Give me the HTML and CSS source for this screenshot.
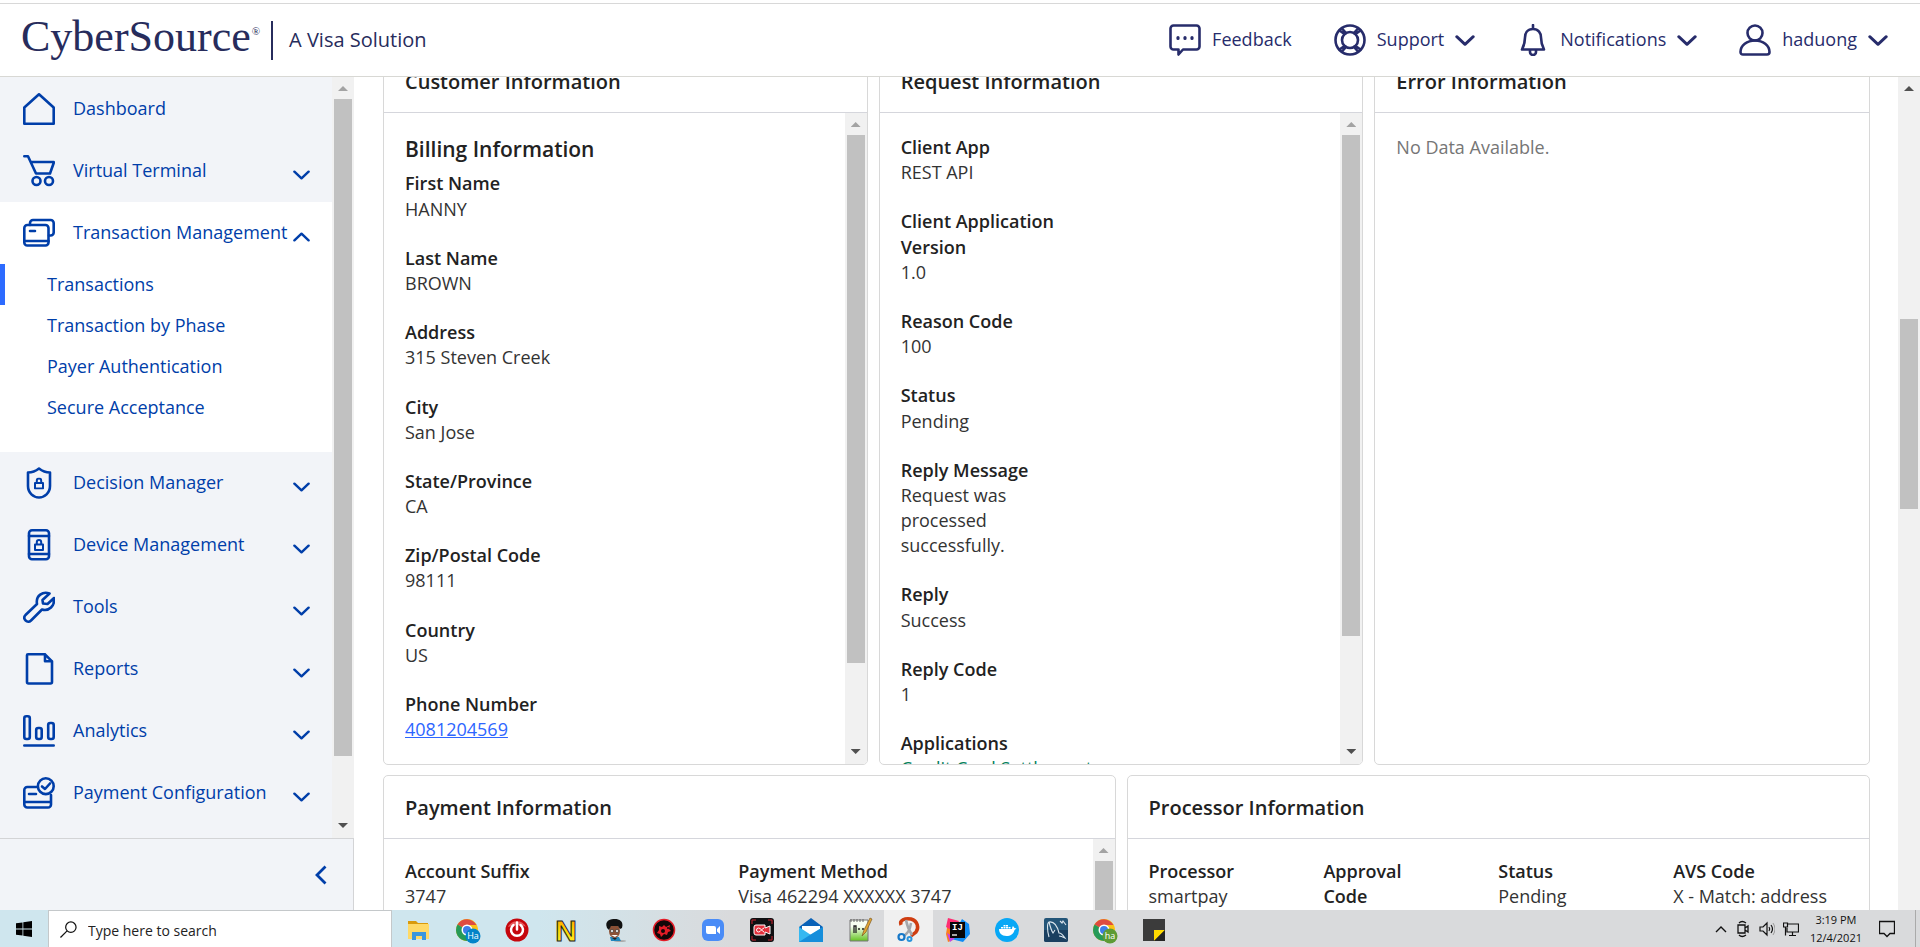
FILE: index.html
```html
<!DOCTYPE html>
<html lang="en">
<head>
<meta charset="utf-8">
<title>CyberSource - Transaction Details</title>
<link rel="stylesheet" href="styles.css">
</head>
<body>
<svg class="sprite" aria-hidden="true">
  <symbol id="chev" viewBox="0 0 18 10"><path d="M1.5 1.5 9 8.5l7.500-7" fill="none" stroke="currentColor" stroke-width="2.600" stroke-linecap="round" stroke-linejoin="round"/></symbol>
  <symbol id="lock" viewBox="0 0 12 12"><path d="M2 5.500h8v5.500H2zM3.800 5V3.200a2.200 2.200 0 0 1 4.400 0V5" fill="none" stroke="currentColor" stroke-width="2" stroke-linejoin="round"/></symbol>
</svg>

<header class="header">
  <div class="brand">
    <span class="brand-name">CyberSource<sup>®</sup></span>
    <span class="brand-tag">A Visa Solution</span>
  </div>
  <nav class="tools" aria-label="Account">
    <button class="tool" type="button">
      <svg class="ico" viewBox="0 0 32 32"><path d="M4.500 1.500h23a3 3 0 0 1 3 3v18a3 3 0 0 1-3 3H14l-4.500 5v-5h-5a3 3 0 0 1-3-3v-18a3 3 0 0 1 3-3z"/><path d="M9 13.500v1M16 13.500v1M23 13.500v1" stroke-width="3.200"/></svg>
      <span>Feedback</span>
    </button>
    <button class="tool" type="button">
      <svg class="ico" viewBox="0 0 32 32"><circle cx="16" cy="16" r="14.500"/><circle cx="16" cy="16" r="8"/><path d="M5.500 6.500 10.500 10M8 4.500l4 4.500M26.500 6.500 21.500 10M24 4.500 20 9M5.500 25.500l5-3.500M8 27.500l4-4.500M26.500 25.500l-5-3.500M24 27.500 20 23"/></svg>
      <span>Support</span><svg class="chev"><use href="#chev"/></svg>
    </button>
    <button class="tool" type="button">
      <svg class="ico" viewBox="0 0 32 32"><path d="M16 1v4M16 5c-5.500 0-8 4-8 8.500 0 6-1 8-3 12h22c-2-4-3-6-3-12C24 9 21.500 5 16 5zM13 26v2a3 3 0 0 0 6 0v-2"/></svg>
      <span>Notifications</span><svg class="chev"><use href="#chev"/></svg>
    </button>
    <button class="tool" type="button">
      <svg class="ico" viewBox="0 0 32 32"><circle cx="16" cy="9" r="7.500"/><path d="M1.500 28c0-6.500 6.500-11.500 14.500-11.500S30.500 21.500 30.500 28c0 1.500-1 2.500-2.500 2.500H4c-1.500 0-2.500-1-2.500-2.500z"/></svg>
      <span>haduong</span><svg class="chev"><use href="#chev"/></svg>
    </button>
  </nav>
</header>

<div class="workspace">
  <aside class="sidebar">
    <div class="side-scroll">
      <nav class="menu" aria-label="Main">
        <button class="item" type="button"><svg class="ico" viewBox="0 0 32 32"><path d="M1.300 14.500 16 1.300l14.700 13.200V30.700H1.300z"/></svg><span>Dashboard</span></button>
        <button class="item" type="button"><svg class="ico" viewBox="0 0 32 32"><path d="M1.300 1.300H5l8 17.200h14L30.700 8V7H8"/><circle cx="13.500" cy="26" r="4"/><circle cx="26" cy="26" r="4"/></svg><span>Virtual Terminal</span><svg class="chev"><use href="#chev"/></svg></button>
        <section class="open">
          <button class="item" type="button" aria-expanded="true"><svg class="ico" viewBox="0 0 32 32"><rect x="1.300" y="8" width="24.200" height="20.500" rx="3"/><path d="M1.300 24h24.200M7 14h5M7 8V6a3 3 0 0 1 3-3h17.700a3 3 0 0 1 3 3v9.500a3 3 0 0 1-3 3H26"/></svg><span>Transaction Management</span><svg class="chev up"><use href="#chev"/></svg></button>
          <a class="sub current" href="#transactions">Transactions</a>
          <a class="sub" href="#phase">Transaction by Phase</a>
          <a class="sub" href="#payer">Payer Authentication</a>
          <a class="sub" href="#secure">Secure Acceptance</a>
        </section>
        <button class="item" type="button"><svg class="ico" viewBox="0 0 32 32"><path d="M16 1.500c2.500 2 6 4 11 4V19c0 7-5.500 11.500-11 11.500S5 26 5 19V5.500c5 0 8.500-2 11-4z"/><use href="#lock" x="10" y="10.500" width="12" height="12"/></svg><span>Decision Manager</span><svg class="chev"><use href="#chev"/></svg></button>
        <button class="item" type="button"><svg class="ico" viewBox="0 0 32 32"><rect x="6" y="1.300" width="20" height="29" rx="3"/><path d="M6 7h20M6 25h20"/><use href="#lock" x="10" y="10" width="12" height="12"/></svg><span>Device Management</span><svg class="chev"><use href="#chev"/></svg></button>
        <button class="item" type="button"><svg class="ico" viewBox="0 0 32 32"><path d="M26.500 2.500C20 0 12.500 4.500 14 13L2.500 24c-3.500 4 2 9 5.500 5.500L19 18.500c7 2 13-3.500 12-11.500l-6.500 6-4.500-.5-.5-3.500z"/></svg><span>Tools</span><svg class="chev"><use href="#chev"/></svg></button>
        <button class="item" type="button"><svg class="ico" viewBox="0 0 32 32"><path d="M5 1.300h17l7 7V29a1.500 1.500 0 0 1-1.500 1.500h-22A1.500 1.500 0 0 1 4 29V2.300a1 1 0 0 1 1-1zM22 1.300v7h7"/></svg><span>Reports</span><svg class="chev"><use href="#chev"/></svg></button>
        <button class="item" type="button"><svg class="ico" viewBox="0 0 32 32"><rect x="1.300" y="1.300" width="5.500" height="22.700" rx="2"/><rect x="13.200" y="13" width="5.500" height="11" rx="2"/><rect x="25.200" y="8" width="5.500" height="16" rx="2"/><path d="M1.300 30.500h29.400"/></svg><span>Analytics</span><svg class="chev"><use href="#chev"/></svg></button>
        <button class="item" type="button"><svg class="ico" viewBox="0 0 32 32"><path d="M14 10H4.300a3 3 0 0 0-3 3v14.500a3 3 0 0 0 3 3H25a3 3 0 0 0 3-3V18M1.300 25H28M6 17h7"/><circle cx="22.800" cy="9.200" r="7.900"/><path d="m19 9.500 3 2.500 5-5.500"/></svg><span>Payment Configuration</span><svg class="chev"><use href="#chev"/></svg></button>
      </nav>
      <div class="bar bar-side"><i class="arrow dim"></i><div class="track"><div class="thumb"></div></div><i class="arrow down"></i></div>
    </div>
    <div class="side-foot">
      <button class="collapse" type="button" aria-label="Collapse menu"><svg viewBox="0 0 12 20"><path d="M10.500 1.500 2 10l8.500 8.500" fill="none" stroke="currentColor" stroke-width="2.800"/></svg></button>
    </div>
  </aside>

  <main class="main">
    <div class="row row-three">
      <section class="card">
        <h2>Customer Information</h2>
        <div class="card-body">
          <div class="fields">
            <h3>Billing Information</h3>
            <dl>
              <div><dt>First Name</dt><dd>HANNY</dd></div>
              <div><dt>Last Name</dt><dd>BROWN</dd></div>
              <div><dt>Address</dt><dd>315 Steven Creek</dd></div>
              <div><dt>City</dt><dd>San Jose</dd></div>
              <div><dt>State/Province</dt><dd>CA</dd></div>
              <div><dt>Zip/Postal Code</dt><dd>98111</dd></div>
              <div><dt>Country</dt><dd>US</dd></div>
              <div><dt>Phone Number</dt><dd><a class="phone" href="#phone">4081204569</a></dd></div>
            </dl>
          </div>
          <div class="bar bar-customer"><i class="arrow dim"></i><div class="track"><div class="thumb"></div></div><i class="arrow down"></i></div>
        </div>
      </section>
      <section class="card">
        <h2>Request Information</h2>
        <div class="card-body">
          <div class="fields">
            <dl class="narrow">
              <div><dt>Client App</dt><dd>REST API</dd></div>
              <div><dt>Client Application Version</dt><dd>1.0</dd></div>
              <div><dt>Reason Code</dt><dd>100</dd></div>
              <div><dt>Status</dt><dd>Pending</dd></div>
              <div><dt>Reply Message</dt><dd>Request was processed successfully.</dd></div>
              <div><dt>Reply</dt><dd>Success</dd></div>
              <div><dt>Reply Code</dt><dd>1</dd></div>
              <div><dt>Applications</dt><dd class="ok">Credit Card Settlement</dd></div>
            </dl>
          </div>
          <div class="bar bar-request"><i class="arrow dim"></i><div class="track"><div class="thumb"></div></div><i class="arrow down"></i></div>
        </div>
      </section>
      <section class="card">
        <h2>Error Information</h2>
        <div class="card-body"><div class="fields"><p class="empty">No Data Available.</p></div></div>
      </section>
    </div>
    <div class="row row-two">
      <section class="card">
        <h2>Payment Information</h2>
        <div class="card-body">
          <div class="fields">
            <dl class="cols two">
              <div><dt>Account Suffix</dt><dd>3747</dd></div>
              <div><dt>Payment Method</dt><dd>Visa 462294 XXXXXX 3747</dd></div>
            </dl>
          </div>
          <div class="bar bar-payment"><i class="arrow dim"></i><div class="track"><div class="thumb"></div></div><i class="arrow down"></i></div>
        </div>
      </section>
      <section class="card">
        <h2>Processor Information</h2>
        <div class="card-body">
          <div class="fields">
            <dl class="cols four">
              <div><dt>Processor</dt><dd>smartpay</dd></div>
              <div><dt>Approval<br>Code</dt><dd></dd></div>
              <div><dt>Status</dt><dd>Pending</dd></div>
              <div><dt>AVS Code</dt><dd>X - Match: address</dd></div>
            </dl>
          </div>
        </div>
      </section>
    </div>
  </main>
  <div class="bar bar-page"><i class="arrow"></i><div class="track"><div class="thumb"></div></div></div>
</div>

<footer class="taskbar">
  <button class="start" type="button" aria-label="Start"><svg viewBox="0 0 16 16"><path d="M0 2.300 6.500 1.400v6.200H0zM7.300 1.200 16 0v7.600H7.300zM0 8.400h6.500v6.200L0 13.700zM7.300 8.400H16V16l-8.700-1.200z"/></svg></button>
  <label class="search"><svg viewBox="0 0 18 18"><circle cx="11.500" cy="6.500" r="5.500" fill="none" stroke="#111" stroke-width="1.300"/><path d="M7.500 10.500.5 17.500" stroke="#111" stroke-width="1.300"/></svg><input type="text" placeholder="Type here to search" aria-label="Type here to search"></label>
  <div class="apps">
    <button type="button" aria-label="File Explorer"><svg viewBox="0 0 24 24"><path d="M1 3h8l2 2h10v3H1z" fill="#d99a0b"/><path d="M1 6h21v15H1z" fill="#ffd966"/><path d="M5 14h14v8h-4v-4H9v4H5z" fill="#3a96dd"/></svg></button>
    <button type="button" aria-label="Chrome Ha"><svg viewBox="0 0 24 24"><circle cx="11" cy="12" r="11" fill="#fbc116"/><path d="M11 12 1.500 6.500A11 11 0 0 1 20.500 7H11z" fill="#df4b3f"/><path d="M11 12 1.500 6.500A11 11 0 0 0 11 23l4-7z" fill="#269a58"/><circle cx="11" cy="12" r="5.500" fill="#fff"/><circle cx="11" cy="12" r="4" fill="#3f7de8"/><circle cx="17" cy="18" r="7.500" fill="#0284c9"/><text x="17" y="21" text-anchor="middle" class="badge">Ha</text></svg></button>
    <button type="button" aria-label="Power"><svg viewBox="0 0 24 24"><circle cx="12" cy="12" r="11.500" fill="#c5060c"/><path d="M3 9a10 10 0 0 1 18 0c-5-3-12-2-18 0z" fill="#e75a5c"/><path d="M8.500 7a6 6 0 1 0 7 0M12 4.500v7" fill="none" stroke="#fff" stroke-width="2.500" stroke-linecap="round"/></svg></button>
    <button type="button" aria-label="N"><svg viewBox="0 0 24 24"><defs><linearGradient id="ng" x1="0" y1="0" x2="0" y2="1"><stop offset="0" stop-color="#ff8a00"/><stop offset=".5" stop-color="#ffd400"/><stop offset="1" stop-color="#fff22d"/></linearGradient></defs><text x="12" y="22.500" text-anchor="middle" class="big-n">N</text></svg></button>
    <button type="button" aria-label="Character"><svg viewBox="0 0 24 24"><ellipse cx="17" cy="23" rx="6" ry="1" fill="#aaa"/><path d="M7 19h9l2 4H8z" fill="#1f86bd"/><ellipse cx="11.500" cy="13" rx="5.500" ry="7" fill="#8b5136"/><path d="M4 10C1 2 8 1 12 1s9 2 7 9l-2 1-2-3H8l-2 4z" fill="#111"/><circle cx="9" cy="13" r="1.500" fill="#fff" stroke="#222" stroke-width=".6"/><circle cx="14" cy="13" r="1.500" fill="#fff" stroke="#222" stroke-width=".6"/><path d="M8 17h7l-3 2z" fill="#fff"/><path d="M9 20h5l-2 2z" fill="#222"/></svg></button>
    <button type="button" aria-label="Game recorder"><svg viewBox="0 0 24 24"><circle cx="12" cy="12" r="10.500" fill="#130708" stroke="#e41c27" stroke-width="1.500"/><path d="m7 8 3 1 2-2 2 2 4-2-1 4 2 2-3 1-1 3-3-1-3 3-1-3-3-1 2-3z" fill="#e41c27"/><circle cx="11" cy="13" r="2" fill="#130708"/><circle cx="16" cy="10" r="1" fill="#130708"/></svg></button>
    <button type="button" aria-label="Zoom"><svg viewBox="0 0 24 24"><rect x="1" y="1" width="22" height="22" rx="6" fill="#4a8cf7"/><path d="M5 8h8a2 2 0 0 1 2 2v6H7a2 2 0 0 1-2-2zM16 11l3-3v8l-3-2.500z" fill="#fff"/></svg></button>
    <button type="button" aria-label="Screen recorder"><svg viewBox="0 0 24 24"><rect width="24" height="24" rx="3" fill="#101012"/><path d="M2 6V2h4M18 2h4v4M22 18v4h-4M6 22H2v-4" fill="none" stroke="#c9232e"/><path d="M6 7h9v3l5-2v8l-5-2v3H6q-2 0-2-2V9q0-2 2-2z" fill="#e4303c" stroke="#fff"/><path d="M14 10c-3 1-3 4-5.500 4a2 2 0 1 1 0-4c2.500 0 3 3 5.500 4" fill="none" stroke="#fff"/></svg></button>
    <button type="button" aria-label="Mail"><svg viewBox="0 0 24 24"><path d="M0 9 12 0l12 9v3H0z" fill="#0a62b8"/><path d="M3 8h18v8H3z" fill="#fff"/><path d="m0 9 12 8 12-8v15H0z" fill="#35b8f1"/><path d="m0 24 14-9L24 9v15z" fill="#168edb"/></svg></button>
    <button type="button" aria-label="Notepad++"><svg viewBox="0 0 24 24"><defs><linearGradient id="gg" x1="0" y1="0" x2="0" y2="1"><stop offset=".3" stop-color="#f8fff2"/><stop offset="1" stop-color="#64c321"/></linearGradient></defs><path d="M2 2h18v21H2z" fill="url(#gg)" stroke="#777"/><path d="M3 1v3M6 1v3M9 1v3M12 1v3M15 1v3" stroke="#666"/><path d="M6 15V8h2v7M10 11h2M14 11h2" stroke="#222" stroke-width="1.300" fill="none"/><path d="m14 18 2-6 6-12 2 1-6 13z" fill="#e4a52f" stroke="#7d5b27" stroke-width=".7"/></svg></button>
    <button type="button" aria-label="Snipping Tool" class="active"><svg viewBox="0 0 24 24"><path d="M4 7C2 2 8 0 14 1c7 2 8 9 5 13l-5 4" fill="none" stroke="#cf3d10" stroke-width="3.500"/><path d="M9 2c1 6 2 9 6 15M14 5c-1 6-2 9-7 13" fill="none" stroke="#a3a6ab" stroke-width="2.500"/><circle cx="4.500" cy="19" r="3" fill="none" stroke="#1778c8" stroke-width="2.200"/><circle cx="12.500" cy="21" r="2" fill="none" stroke="#2a94dc" stroke-width="2"/></svg></button>
    <button type="button" aria-label="IntelliJ IDEA"><svg viewBox="0 0 24 24"><path d="m2 4 6 1-1 17-5 2-2-8z" fill="#fc801d"/><path d="M2 0 13 3 7 13 0 9z" fill="#fe2d72"/><path d="m16 1 7 5 1 10-7 8-12-3z" fill="#108cf5"/><path d="m1 15 8 5-5 4z" fill="#c740e8"/><path d="M4 4h15v16H4z" fill="#080608"/><path d="M6 17h5" stroke="#fff" stroke-width="1.300"/><text x="6" y="12" class="ij">IJ</text></svg></button>
    <button type="button" aria-label="Docker"><svg viewBox="0 0 24 24"><circle cx="12" cy="12" r="12" fill="#08a8f6"/><path d="M4 11h13c0-2 1-3 1-3l1.500 2 2 .5-2 1.500c-1 4-4 6-8 6-5 0-7.500-3-7.500-7z" fill="#fff"/><path d="M6 9h2v1.500H6zM8.500 9h2v1.500h-2zM11 9h2v1.500h-2zM13.500 9h2v1.500h-2zM8.500 7h2v1.500h-2zM11 7h2v1.500h-2z" fill="#fff"/></svg></button>
    <button type="button" aria-label="MySQL Workbench"><svg viewBox="0 0 24 24"><rect width="24" height="24" rx="2" fill="#245578"/><path d="M0 12h24v10a2 2 0 0 1-2 2H2a2 2 0 0 1-2-2z" fill="#1b3f60"/><path d="M5 19C3 12 3 5 5 4c6-1 9 7 10 11 2 0 4 2 6 5-2-1-4-2-6-2M5 4c1 4 2 8 4 11l2-3M16 3l2 2 1-2 3 4" fill="none" stroke="#dbe6ee" stroke-width="1.100"/></svg></button>
    <button type="button" aria-label="Chrome ha"><svg viewBox="0 0 24 24"><circle cx="11" cy="12" r="11" fill="#fbc116"/><path d="M11 12 1.500 6.500A11 11 0 0 1 20.500 7H11z" fill="#df4b3f"/><path d="M11 12 1.500 6.500A11 11 0 0 0 11 23l4-7z" fill="#269a58"/><circle cx="11" cy="12" r="5.500" fill="#fff"/><circle cx="11" cy="12" r="4" fill="#3f7de8"/><circle cx="17" cy="18" r="7.500" fill="#5d9b35"/><text x="17" y="21" text-anchor="middle" class="badge">ha</text></svg></button>
    <button type="button" aria-label="Sticky Notes"><svg viewBox="0 0 24 24"><path d="M1 1h22v22H1z" fill="#3b3b3b"/><path d="M12 12h11L12 23z" fill="#ffda00"/><path d="M23 12v11H12z" fill="#242424"/></svg></button>
  </div>
  <div class="tray">
    <svg class="caret" viewBox="0 0 12 8"><path d="m1 7 5-5 5 5" fill="none" stroke="#111" stroke-width="1.400"/></svg>
    <svg viewBox="0 0 16 18"><path d="M3 5h7v8H3zM10 8l3-2v6l-3-2M4 3q3-3 7 0M4 15q3 3 7 0" fill="none" stroke="#111" stroke-width="1.300"/></svg>
    <svg viewBox="0 0 16 18"><path d="M1 7h3l4-4v12l-4-4H1zM10 7q1.500 2 0 4M12 5q3 4 0 8" fill="none" stroke="#111" stroke-width="1.200"/><path d="M14 3q4 6 0 12" fill="none" stroke="#999"/></svg>
    <svg viewBox="0 0 16 18"><path d="M5 4h10.500v8H4V8M.5 3h4v4h-4zM2.500 7v8.500M9.500 12v3.500M6 15.500h7" fill="none" stroke="#111" stroke-width="1.200"/></svg>
    <div class="clock"><span>3:19 PM</span><span>12/4/2021</span></div>
    <svg class="note" viewBox="0 0 16 18"><path d="M.5 1.500h15v12H11l-3 3-3-3H.5z" fill="none" stroke="#111" stroke-width="1.300"/></svg>
  </div>
</footer>
</body>
</html>
```
FILE: styles.css
```css
* { box-sizing: border-box; }

body {
  margin: 0;
  height: 100vh;
  display: flex;
  flex-direction: column;
  overflow: hidden;
  background: #fff;
  color: #222;
  font-family: "Open Sans", "Noto Sans", sans-serif;
  font-size: 18px;
  line-height: 1.4;
}

button {
  font: inherit;
  color: inherit;
  background: none;
  border: 0;
  padding: 0;
  text-align: left;
}

h2, h3, dl, dd, p { margin: 0; }

.sprite {
  position: absolute;
  width: 0;
  height: 0;
}

/* Header */
.header {
  flex: none;
  display: flex;
  align-items: center;
  justify-content: space-between;
  height: 74px;
  margin-top: 3px;
  padding: 0 32px 0 21px;
  border-top: 1px solid #d8d8d8;
  border-bottom: 1px solid #d8d8d4;
  color: #272c6b;
}

.brand {
  display: flex;
  align-items: center;
}

.brand-name {
  padding: 0 11px 8px 0;
  border-right: 2px solid #272c5c;
  color: #272c5c;
  font-family: "Liberation Serif", serif;
  font-size: 44px;
  line-height: 31px;
}

.brand-name sup {
  margin-left: 1px;
  font-size: 11px;
  line-height: 11px;
  vertical-align: 16px;
}

.brand-tag {
  padding-left: 16px;
  color: #272c5c;
  font-size: 20px;
}

.tools {
  display: flex;
  gap: 42px;
}

.tool {
  display: flex;
  align-items: center;
  gap: 11px;
}

.ico {
  flex: none;
  width: 32px;
  height: 32px;
  fill: none;
  stroke: currentColor;
  stroke-width: 2.6;
  stroke-linejoin: round;
  stroke-linecap: round;
}

.tool .chev {
  width: 20px;
  height: 11px;
}

/* Workspace */
.workspace {
  flex: 1;
  min-height: 0;
  display: flex;
}

.sidebar {
  flex: none;
  width: 354px;
  display: flex;
  flex-direction: column;
  background: #f2f4f8;
  color: #003ea9;
}

.side-scroll {
  flex: 1;
  min-height: 0;
  display: flex;
  overflow: hidden;
}

.menu {
  flex: 1;
  min-width: 0;
  padding-top: 1px;
}

.item {
  display: flex;
  align-items: center;
  width: 100%;
  padding: 15px 22px 15px 23px;
}

.item .ico { margin-right: 18px; }

.item span {
  flex: 1;
  white-space: nowrap;
}

.item .chev {
  flex: none;
  width: 17px;
  height: 10px;
  margin-top: 7px;
}

.item .up { transform: rotate(180deg); }

.open {
  padding-bottom: 24px;
  background: #fff;
}

.sub {
  display: block;
  padding-left: 42px;
  border-left: 5px solid transparent;
  color: inherit;
  line-height: 41px;
  text-decoration: none;
}

.current { border-left-color: #2d6bff; }

.side-foot {
  flex: none;
  display: flex;
  align-items: center;
  justify-content: flex-end;
  height: 72px;
  padding-right: 26px;
  border-top: 1px solid #d3d4d6;
  border-right: 1px solid #d3d4d6;
}

.collapse {
  display: flex;
  width: 12px;
  height: 20px;
}

/* Scroll bars */
.bar {
  flex: none;
  width: 22px;
  display: flex;
  flex-direction: column;
  align-items: center;
  background: #f1f1f1;
}

.arrow {
  flex: none;
  width: 10px;
  height: 5px;
  margin: 9px 0 8px;
  background: #505050;
  clip-path: polygon(50% 0, 100% 100%, 0 100%);
}

.dim { background: #a3a3a3; }

.down {
  margin: 7px 0 10px;
  clip-path: polygon(0 0, 100% 0, 50% 100%);
}

.track {
  flex: 1;
  width: 18px;
}

.thumb {
  height: 100%;
  background: #c1c1c1;
}

.bar-side .thumb { height: 91.6%; }
.bar-customer .thumb { height: 87%; }
.bar-request .thumb { height: 82.5%; }

.bar-page .track {
  display: grid;
  grid-template-rows: 271fr 234fr 495fr;
}

.bar-page .thumb { grid-row: 2; }

/* Cards */
.main {
  flex: 1;
  min-width: 0;
  padding: 0 28px 0 29px;
  overflow: hidden;
}

.row {
  display: grid;
  margin-bottom: 10px;
}

.row-three {
  grid-template-columns: repeat(3, 1fr);
  margin-top: -28px;
}

.row-two { grid-template-columns: repeat(2, 1fr); }

.row-three .card { height: 716px; }
.row-two .card { height: 300px; }

.card {
  display: flex;
  flex-direction: column;
  min-width: 0;
  margin-right: 11px;
  border: 1px solid #d8d8d8;
  border-radius: 5px;
  overflow: hidden;
}

.card:last-child { margin-right: 0; }

.card h2 {
  flex: none;
  height: 63px;
  padding-left: 21px;
  border-bottom: 1px solid #d5d6dc;
  font-size: 20px;
  font-weight: 600;
  line-height: 63px;
}

.card-body {
  flex: 1;
  min-height: 0;
  display: flex;
}

.fields {
  flex: 1;
  min-width: 0;
  padding: 22px 21px 0;
  overflow: hidden;
}

.row-two .fields { padding-top: 20px; }

.fields h3 {
  margin-bottom: 7px;
  font-size: 21px;
  font-weight: 600;
}

dl > div { margin-bottom: 24px; }

dt { font-weight: 600; }

dd { color: #333; }

.narrow { width: 174px; }

.cols { display: grid; }
.two { grid-template-columns: repeat(2, 1fr); }
.four { grid-template-columns: repeat(4, 1fr); }

.cols dd, .ok { white-space: nowrap; }

.narrow .ok { color: #00805a; }

.phone { color: #2d66ff; }

.empty { color: #767676; }

/* Taskbar */
.taskbar {
  flex: none;
  display: flex;
  height: 37px;
  padding-right: 4px;
  background: linear-gradient(90deg, #cfe6ee 28%, #d9dadc 38%);
}

.start {
  display: grid;
  place-items: center;
  width: 48px;
}

.start svg {
  width: 16px;
  height: 16px;
}

.search {
  display: flex;
  align-items: center;
  gap: 11px;
  width: 344px;
  padding-left: 11px;
  border: 1px solid #c4c8ca;
  border-bottom: 0;
  background: #fff;
}

.search svg {
  width: 17px;
  height: 17px;
}

.search input {
  flex: 1;
  min-width: 0;
  padding: 2px 0 0;
  border: 0;
  background: none;
  font: 14px "Open Sans", sans-serif;
}

.search input::placeholder { color: #222; }

.apps {
  display: flex;
  margin-left: 2px;
}

.apps button {
  display: grid;
  place-items: center;
  width: 49px;
  padding-top: 2px;
}

.apps svg {
  width: 24px;
  height: 24px;
  overflow: visible;
}

.apps .active { background: #f0f0f0; }

.badge {
  fill: #fff;
  font-size: 9px;
}

.big-n {
  fill: url(#ng);
  stroke: #222;
  stroke-width: 1;
  font: bold 30px "Liberation Sans", sans-serif;
}

.ij {
  fill: #fff;
  font: bold 9px "Liberation Mono", monospace;
}

.tray {
  flex: 1;
  display: flex;
  align-items: center;
  justify-content: flex-end;
  gap: 8px;
  padding-right: 20px;
  border-right: 1px solid #aaa;
}

.tray svg {
  width: 16px;
  height: 18px;
}

.tray .caret {
  width: 12px;
  height: 8px;
}

.clock {
  display: flex;
  flex-direction: column;
  align-items: center;
  margin: 0 9px 0 3px;
  color: #111;
  font-size: 11px;
  line-height: 18px;
}
```
